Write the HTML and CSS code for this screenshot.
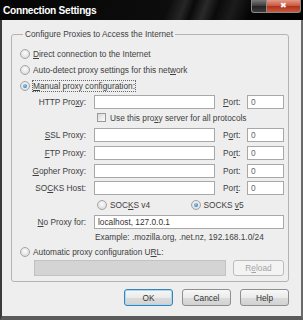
FILE: index.html
```html
<!DOCTYPE html>
<html lang="en">
<head>
  <meta charset="UTF-8" />
  <title>Connection Settings</title>
  <link rel="stylesheet" href="styles.css">
</head>
<body>
  <div class="window">
    <div class="titlebar">
      <span class="title">Connection Settings</span>
      <div class="caption-btns">
        <span class="cap-min"></span>
        <span class="cap-close">&#x2716;</span>
      </div>
    </div>

    <div class="client">
      <fieldset class="group">
        <legend>Configure Proxies to Access the Internet</legend>

        <label class="radio-row"><span class="radio"></span><span><u>D</u>irect connection to the Internet</span></label>
        <label class="radio-row"><span class="radio"></span><span>Auto-detect proxy settings for this net<u>w</u>ork</span></label>
        <label class="radio-row"><span class="radio checked"></span><span class="focus"><u>M</u>anual proxy configuration:</span></label>

        <div class="proxy-grid">
          <span class="lbl">HTTP Pro<u>x</u>y:</span><span class="field"></span><span class="port-lbl"><u>P</u>ort:</span><span class="field port">0</span>

          <span></span>
          <label class="check-row"><span class="checkbox"></span><span>Use this pro<u>x</u>y server for all protocols</span></label>

          <span class="lbl"><u>S</u>SL Proxy:</span><span class="field"></span><span class="port-lbl">P<u>o</u>rt:</span><span class="field port">0</span>
          <span class="lbl"><u>F</u>TP Proxy:</span><span class="field"></span><span class="port-lbl">Po<u>r</u>t:</span><span class="field port">0</span>
          <span class="lbl"><u>G</u>opher Proxy:</span><span class="field"></span><span class="port-lbl">Port:</span><span class="field port">0</span>
          <span class="lbl">SO<u>C</u>KS Host:</span><span class="field"></span><span class="port-lbl">Por<u>t</u>:</span><span class="field port">0</span>

          <span></span>
          <div class="socks">
            <label class="radio-row"><span class="radio"></span><span>SOC<u>K</u>S v4</span></label>
            <label class="radio-row"><span class="radio checked"></span><span>SOCKS <u>v</u>5</span></label>
          </div>

          <span class="lbl"><u>N</u>o Proxy for:</span><span class="field wide">localhost, 127.0.0.1</span>
          <span></span><span class="example">Example: .mozilla.org, .net.nz, 192.168.1.0/24</span>
        </div>

        <label class="radio-row"><span class="radio"></span><span>Automatic proxy configuration U<u>R</u>L:</span></label>
        <div class="auto-row">
          <span class="field disabled"></span>
          <button class="btn reload">R<u>e</u>load</button>
        </div>
      </fieldset>

      <div class="dialog-btns">
        <button class="btn default">OK</button>
        <button class="btn">Cancel</button>
        <button class="btn">Help</button>
      </div>
    </div>
  </div>
</body>
</html>
```

FILE: styles.css
```css
/* Base */
body {
  margin: 0;
  background: #fff;
  font-family: "Liberation Sans", Arial, sans-serif;
  font-size: 8.3px;
  color: #404040;
}

/* Window frame */
.window {
  width: 303px;
  height: 320px;
  box-sizing: border-box;
  background: #eeeeee;
  border-left: 2px solid #3a3a3a;
  border-right: 2px solid #6a6a6a;
  border-bottom: 4px solid #5a5a5a;
  display: flex;
  flex-direction: column;
}

.titlebar {
  height: 20px;
  background: linear-gradient(110deg, #050505 0%, #0d0d0d 55%, #262626 60%, #0a0a0a 63%, #2a2a2a 67%, #0a0a0a 71%, #1c1c1c 76%, #050505 82%, #000 100%);
  display: flex;
  align-items: flex-start;
  justify-content: space-between;
  margin: 0 -2px;
  padding: 0 2px 0 3px;
}

.title {
  color: #fff;
  font-weight: bold;
  font-size: 10.2px;
  letter-spacing: -0.3px;
  line-height: 20px;
  margin-top: 1px;
}

.caption-btns {
  display: flex;
}

.cap-min, .cap-close {
  height: 13px;
  box-sizing: border-box;
  border: 1px solid #8a8a8a;
  border-top: none;
}
.cap-min {
  width: 16px;
  background: linear-gradient(#7a7a7a, #3a3a3a 50%, #222 51%, #3c3c3c);
  border-radius: 0 0 0 3px;
}
.cap-close {
  width: 34px;
  border-left: none;
  background: linear-gradient(#e59a88, #c9553e 50%, #b03218 51%, #c65a40);
  color: #fff;
  font-size: 8px;
  text-align: center;
  line-height: 12px;
  border-radius: 0 0 3px 0;
}

/* Client area */
.client {
  flex: 1;
  padding: 9px 12px 0 9px;
  display: flex;
  flex-direction: column;
}

.group {
  margin: 0;
  padding: 7px 4px 5px 8px;
  border: 1px solid #b4b4b4;
  border-radius: 3px;
}

.group legend {
  padding: 0 2px;
  margin-left: 3px;
  line-height: 10px;
}

.radio-row {
  display: flex;
  align-items: center;
  gap: 3px;
  height: 16px;
}

.radio {
  width: 8px;
  height: 8px;
  border-radius: 50%;
  border: 1px solid #a4a4a4;
  background: radial-gradient(circle at 50% 40%, #fdfdfd, #d2d2d2);
  position: relative;
  flex: none;
}
.radio.checked::after {
  content: "";
  position: absolute;
  left: 2px; top: 2px;
  width: 4px; height: 4px;
  border-radius: 50%;
  background: radial-gradient(circle at 40% 35%, #8fd3f5, #1765a6);
}

.focus {
  outline: 1px dotted #666;
}

/* Proxy rows */
.proxy-grid {
  display: grid;
  grid-template-columns: 74px 121px 32px 37px;
  grid-template-rows: 15px 17px 18px 18px 17px 17px 18px 16px 14px;
  align-items: center;
}

.lbl {
  text-align: right;
  padding-right: 8px;
}

.port-lbl {
  padding-left: 8px;
}

.field {
  height: 14px;
  box-sizing: border-box;
  border: 1px solid #a8a8a8;
  background: #fff;
  padding: 0 3px;
  line-height: 12px;
  color: #333;
}
.field.port { color: #666; }
.field.wide { grid-column: span 3; }
.field.disabled {
  width: 192px;
  height: 16px;
  background: #d4d4d4;
  border-color: #c2c2c2;
}

.check-row {
  grid-column: span 3;
  display: flex;
  align-items: center;
  gap: 4px;
  padding-left: 3px;
}

.checkbox {
  width: 7px;
  height: 7px;
  border: 1px solid #9a9a9a;
  background: linear-gradient(135deg, #d8d8d8, #fcfcfc);
}

.socks {
  grid-column: span 3;
  display: flex;
  padding-left: 3px;
}
.socks .radio-row { width: 108px; }

.example {
  grid-column: span 3;
  padding-left: 1px;
}

.auto-row {
  display: flex;
  gap: 7px;
  padding-left: 14px;
}

/* Buttons */
.btn {
  font-family: inherit;
  font-size: 8.3px;
  color: #333;
  height: 17px;
  border: 1px solid #8e8e8e;
  border-radius: 3px;
  background: linear-gradient(#f7f7f7 0%, #ebebeb 50%, #dcdcdc 51%, #d2d2d2 100%);
  padding: 0;
}
.btn.reload {
  width: 51px;
  height: 16px;
  color: #a4a4a4;
  border-color: #bdbdbd;
  background: #f3f3f3;
}

.dialog-btns {
  display: flex;
  justify-content: flex-end;
  gap: 9px;
  margin-top: 7px;
}
.dialog-btns .btn { width: 49px; }
.btn.default {
  border-color: #3d80b3;
  box-shadow: inset 0 0 0 1px #a5dcf4;
}
```
